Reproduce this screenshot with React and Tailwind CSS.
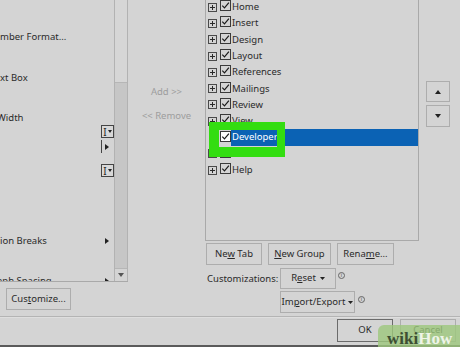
import React from "react";

const rightItems = [
  "Home",
  "Insert",
  "Design",
  "Layout",
  "References",
  "Mailings",
  "Review",
  "View",
  "Developer",
  "Add-ins",
  "Help",
];

const Expander = () => (
  <svg width="9" height="9" viewBox="0 0 9 9" className="shrink-0">
    <rect x="0.5" y="0.5" width="8" height="8" fill="none" stroke="#4a4a4a" />
    <path d="M2 4.5h5M4.5 2v5" stroke="#2a2a2a" />
  </svg>
);

const Check = ({ white }) => (
  <svg width="11" height="11" viewBox="0 0 11 11" className="shrink-0 -mt-[3px]">
    <rect x="0.5" y="0.5" width="10" height="10" fill={white ? "#ffffff" : "none"} stroke="#3a3a3a" />
    <path d="M2.3 5.6l2.2 2.3 4.4-5.2" fill="none" stroke="#1a1a1a" strokeWidth="1.2" />
  </svg>
);

const ComboIcon = () => (
  <div className="w-[13px] h-[13px] border border-[#444] flex items-center justify-center gap-[1px] bg-[#d8d8d8]">
    <span className="text-[10px] leading-none text-[#222]">I</span>
    <svg width="4" height="3" viewBox="0 0 4 3">
      <path d="M0 0h4L2 3z" fill="#222" />
    </svg>
  </div>
);

const RightArrow = () => (
  <svg width="4" height="6" viewBox="0 0 4 6">
    <path d="M0 0l4 3-4 3z" fill="#222" />
  </svg>
);

const Btn = ({ className, children }) => (
  <div className={"border border-[#adadad] flex items-center justify-center text-[#2a2a2a] " + className}>
    {children}
  </div>
);

const Info = () => (
  <div className="w-[7px] h-[7px] rounded-full border border-[#666] flex items-center justify-center text-[5px] leading-none text-[#444]">
    i
  </div>
);

export default function App() {
  return (
    <div className="w-[460px] h-[347px] bg-[#d4d4d4] relative overflow-hidden font-['Noto_Sans',sans-serif] text-[9.5px] text-[#2a2a2a] flex flex-col">
      <div className="h-[316px] flex shrink-0">
        {/* left command list */}
        <div className="w-[128px] flex flex-col">
          <div className="h-[282px] border-b border-[#a9a9a9] flex overflow-hidden">
            <div className="flex-1 flex flex-col overflow-hidden">
              <div className="mt-[30px] h-[14px] leading-[14px]">mber Format...</div>
              <div className="mt-[27px] h-[14px] leading-[14px]">xt Box</div>
              <div className="mt-[26px] h-[14px] leading-[14px] -ml-[3px]">Width</div>
              <div className="flex justify-end h-[13px] shrink-0">
                <ComboIcon />
              </div>
              <div className="flex justify-start h-[13px] mt-[2px] pl-[101px] items-center gap-[3px] shrink-0">
                <div className="w-[1px] h-[13px] bg-[#444]" />
                <RightArrow />
              </div>
              <div className="flex justify-end h-[13px] mt-[11px] shrink-0">
                <ComboIcon />
              </div>
              <div className="mt-[57px] h-[14px] leading-[14px] flex items-center justify-between pr-[5px] shrink-0">
                <span>ion Breaks</span>
                <RightArrow />
              </div>
              <div className="mt-[26px] h-[14px] leading-[14px] flex items-center justify-between pr-[5px] shrink-0 -ml-[3px]">
                <span>aph Spacing</span>
                <RightArrow />
              </div>
            </div>
            <div className="w-[14px] border-l border-r border-[#b2b2b2] flex flex-col bg-[#c6c6c6]">
              <div className="h-[83px] bg-[#d6d6d6] border-b border-[#b6b6b6]" />
              <div className="flex-1" />
              <div className="h-[13px] border-t border-[#b6b6b6] bg-[#d4d4d4] flex items-center justify-center">
                <svg width="6" height="4" viewBox="0 0 6 4">
                  <path d="M0 0h6L3 4z" fill="#555" />
                </svg>
              </div>
            </div>
          </div>
          <Btn className="mt-[6px] ml-[6px] w-[65px] h-[22px]">
            <span>
              Cus<span className="underline">t</span>omize...
            </span>
          </Btn>
        </div>

        {/* add / remove */}
        <div className="w-[77px] flex flex-col items-center text-[#9d9d9d]">
          <div className="mt-[85px] h-[14px] leading-[14px]">Add &gt;&gt;</div>
          <div className="mt-[10px] h-[14px] leading-[14px]">&lt;&lt; Remove</div>
        </div>

        {/* right tab list */}
        <div className="w-[214px] flex flex-col">
          <div className="h-[241px] border-l border-r border-b border-[#a9a9a9] overflow-hidden relative">
            <div className="-mt-[1px] flex flex-col">
              {rightItems.map((name) => {
                const sel = name === "Developer";
                return (
                  <div key={name} className="h-[16.3px] flex items-center pl-[2px] shrink-0">
                    {sel ? <div className="w-[9px]" /> : <Expander />}
                    <div className="w-[3px]" />
                    <Check white={sel} />
                    <div
                      className={
                        sel
                          ? "flex-1 h-full bg-[#0b62b4] text-white flex items-center pl-[1px]"
                          : "pl-[1px]"
                      }
                    >
                      {name}
                    </div>
                  </div>
                );
              })}
            </div>
            <div className="absolute left-[3px] top-[122px] w-[76px] h-[35px] border-l-[10px] border-t-[8px] border-r-[8px] border-b-[10px] border-[#33dd11]" />
          </div>
          <div className="flex gap-[6px] mt-[2px] pl-[1px]">
            <Btn className="w-[56px] h-[22px]">
              <span>
                Ne<span className="underline">w</span> Tab
              </span>
            </Btn>
            <Btn className="w-[63px] h-[22px]">
              <span>
                <span className="underline">N</span>ew Group
              </span>
            </Btn>
            <Btn className="w-[57px] h-[22px]">
              <span>
                Rena<span className="underline">m</span>e...
              </span>
            </Btn>
          </div>
          <div className="flex mt-[3px] pl-[2px]">
            <div className="w-[73px] pt-[4px] leading-[14px]">Customizations:</div>
            <div className="flex flex-col gap-[2px]">
              <div className="flex items-start gap-[2px]">
                <Btn className="w-[56px] h-[21px] gap-[4px]">
                  <span>
                    R<span className="underline">e</span>set
                  </span>
                  <svg width="5" height="3" viewBox="0 0 5 3">
                    <path d="M0 0h5L2.5 3z" fill="#222" />
                  </svg>
                </Btn>
                <div className="mt-[4px]">
                  <Info />
                </div>
              </div>
              <div className="flex items-start gap-[3px]">
                <Btn className="w-[75px] h-[22px] gap-[3px]">
                  <span>
                    Im<span className="underline">p</span>ort/Export
                  </span>
                  <svg width="5" height="3" viewBox="0 0 5 3">
                    <path d="M0 0h5L2.5 3z" fill="#222" />
                  </svg>
                </Btn>
                <div className="mt-[5px]">
                  <Info />
                </div>
              </div>
            </div>
          </div>
        </div>

        {/* move up / down */}
        <div className="flex-1 flex flex-col pt-[81px] pl-[7px] gap-[3px]">
          <Btn className="w-[24px] h-[21px]">
            <svg width="6" height="4" viewBox="0 0 6 4">
              <path d="M0 4h6L3 0z" fill="#222" />
            </svg>
          </Btn>
          <Btn className="w-[24px] h-[22px]">
            <svg width="6" height="4" viewBox="0 0 6 4">
              <path d="M0 0h6L3 4z" fill="#222" />
            </svg>
          </Btn>
        </div>
      </div>

      {/* separator */}
      <div className="h-[1px] bg-[#b4b4b4] shrink-0" />
      <div className="h-[1px] bg-[#dedede] shrink-0" />

      {/* OK / Cancel */}
      <div className="flex-1 flex pl-[337px] gap-[7px] pt-[1px]">
        <div className="w-[56px] h-[23px] border border-[#6b6b6b] flex items-center justify-center">OK</div>
        <Btn className="w-[56px] h-[23px]">Cancel</Btn>
      </div>
      <div className="h-[2px] bg-[#5a5a5a] shrink-0" />

      {/* wikiHow watermark */}
      <div className="absolute left-[378px] top-[325px] w-[84px] h-[24px] rounded-tl-[6px] bg-[#9cc77c]/80 flex items-end pl-[9px] pb-[2px] font-['Liberation_Serif',serif] font-bold text-[17px] leading-none">
        <span className="text-[#3d4f33]">wiki</span>
        <span className="text-[#eef4e8]">How</span>
      </div>
    </div>
  );
}
